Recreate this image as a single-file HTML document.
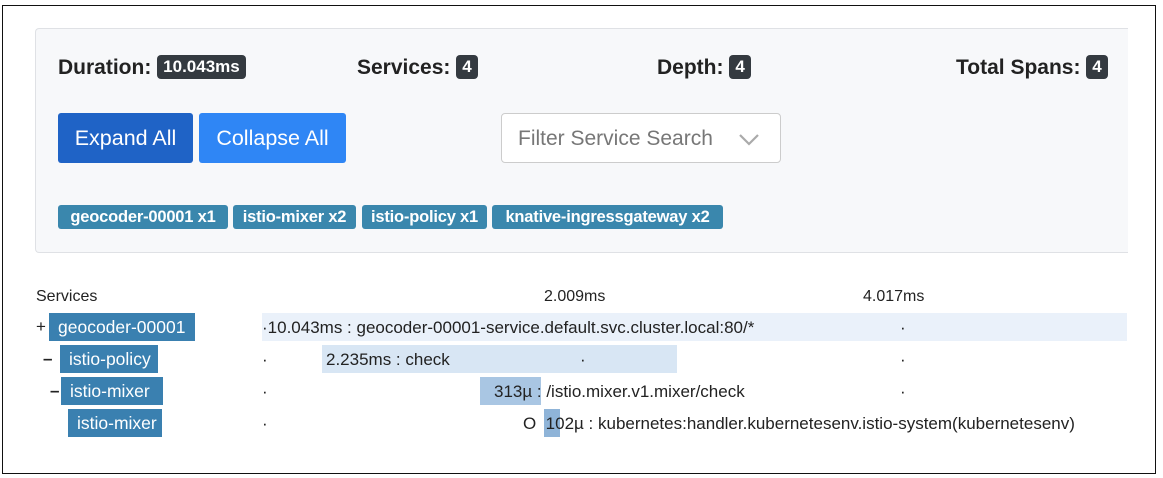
<!DOCTYPE html>
<html><head><meta charset="utf-8"><style>
*{box-sizing:border-box;margin:0;padding:0}
body{width:1163px;height:478px;background:#fff;font-family:"Liberation Sans",sans-serif;position:relative;overflow:hidden;color:#212529}
.frame{position:absolute;left:2px;top:5px;width:1154px;height:469px;border:1.5px solid #111}
.card{position:absolute;left:35px;top:28px;width:1093px;height:225px;background:#f7f8fa;border:1px solid #dfe1e5;border-right:none;border-radius:4px 0 0 4px}
.abs{position:absolute;white-space:nowrap}
.h{font-weight:bold;font-size:21px;color:#222}
.b{display:inline-block;background:#343a40;color:#fff;font-size:17px;padding:2px 6px;border-radius:4px;vertical-align:2px}
.btn{position:absolute;color:#fff;font-size:21.5px;text-align:center;line-height:50px;border-radius:3px}
.tag{position:absolute;top:205px;height:24px;background:#3a87ad;color:#fff;font-weight:bold;font-size:16.5px;line-height:24px;text-align:center;border-radius:3px;letter-spacing:-0.2px;white-space:nowrap}
.svc{position:absolute;background:#3a80b0;color:#fff;font-size:17.5px;height:28px;line-height:28px;padding-left:9px;white-space:nowrap}
.t{font-size:17px;color:#222}
.bar{position:absolute;height:28px}
</style></head><body>
<div class="frame"></div>
<div class="card"></div>
<div class="abs h" style="left:58px;top:55px">Duration: <span class="b">10.043ms</span></div>
<div class="abs h" style="left:357px;top:55px">Services: <span class="b">4</span></div>
<div class="abs h" style="left:657px;top:55px">Depth: <span class="b">4</span></div>
<div class="abs h" style="left:956px;top:55px">Total Spans: <span class="b">4</span></div>
<div class="btn" style="left:58px;top:113px;width:135px;background:#1f63c6">Expand All</div>
<div class="btn" style="left:199px;top:113px;width:147px;background:#2f86f5">Collapse All</div>
<div class="abs" style="left:501px;top:113px;width:280px;height:50px;background:#fff;border:1px solid #ccc;border-radius:4px;font-size:21px;color:#777;line-height:50px;padding-left:16px">Filter Service Search
<svg style="position:absolute;left:236px;top:19px" width="22" height="14" viewBox="0 0 22 14"><path d="M2 2l9 9 9-9" fill="none" stroke="#aaa" stroke-width="2.2"/></svg></div>
<div class="tag" style="left:58px;width:170px">geocoder-00001 x1</div>
<div class="tag" style="left:233px;width:123px">istio-mixer x2</div>
<div class="tag" style="left:362px;width:125px">istio-policy x1</div>
<div class="tag" style="left:492px;width:231px">knative-ingressgateway x2</div>
<div class="abs t" style="left:36px;top:288px;font-size:16px">Services</div>
<div class="abs t" style="left:544px;top:288px;font-size:16px">2.009ms</div>
<div class="abs t" style="left:863px;top:288px;font-size:16px">4.017ms</div>
<div class="bar" style="left:262px;top:313px;width:865px;background:#eaf1fa"></div>
<div class="bar" style="left:322px;top:345px;width:355px;background:#d8e6f4"></div>
<div class="bar" style="left:480px;top:377px;width:61px;background:#a9c6e3"></div>
<div class="bar" style="left:544px;top:409px;width:16px;background:#8fb4d8"></div>
<div class="abs t" style="left:36px;top:317px">+</div>
<div class="svc" style="left:49px;top:313px;width:146px">geocoder-00001</div>
<div class="abs t" style="left:43px;top:349px;font-weight:bold">–</div>
<div class="svc" style="left:60px;top:345px;width:98px">istio-policy</div>
<div class="abs t" style="left:50px;top:381px;font-weight:bold">–</div>
<div class="svc" style="left:61px;top:377px;width:102px">istio-mixer</div>
<div class="svc" style="left:68px;top:409px;width:94px">istio-mixer</div>
<div class="abs t" style="left:262px;top:318px">·10.043ms : geocoder-00001-service.default.svc.cluster.local:80/*</div>
<div class="abs t" style="left:900px;top:318px">·</div>
<div class="abs t" style="left:262px;top:350px">·</div>
<div class="abs t" style="left:326px;top:350px">2.235ms : check</div>
<div class="abs t" style="left:580px;top:350px">·</div>
<div class="abs t" style="left:900px;top:350px">·</div>
<div class="abs t" style="left:262px;top:382px">·</div>
<div class="abs t" style="left:494px;top:382px">313µ : /istio.mixer.v1.mixer/check</div>
<div class="abs t" style="left:900px;top:382px">·</div>
<div class="abs t" style="left:262px;top:414px">·</div>
<div class="abs t" style="left:523px;top:414px">O&nbsp; 102µ : kubernetes:handler.kubernetesenv.istio-system(kubernetesenv)</div>
</body></html>
